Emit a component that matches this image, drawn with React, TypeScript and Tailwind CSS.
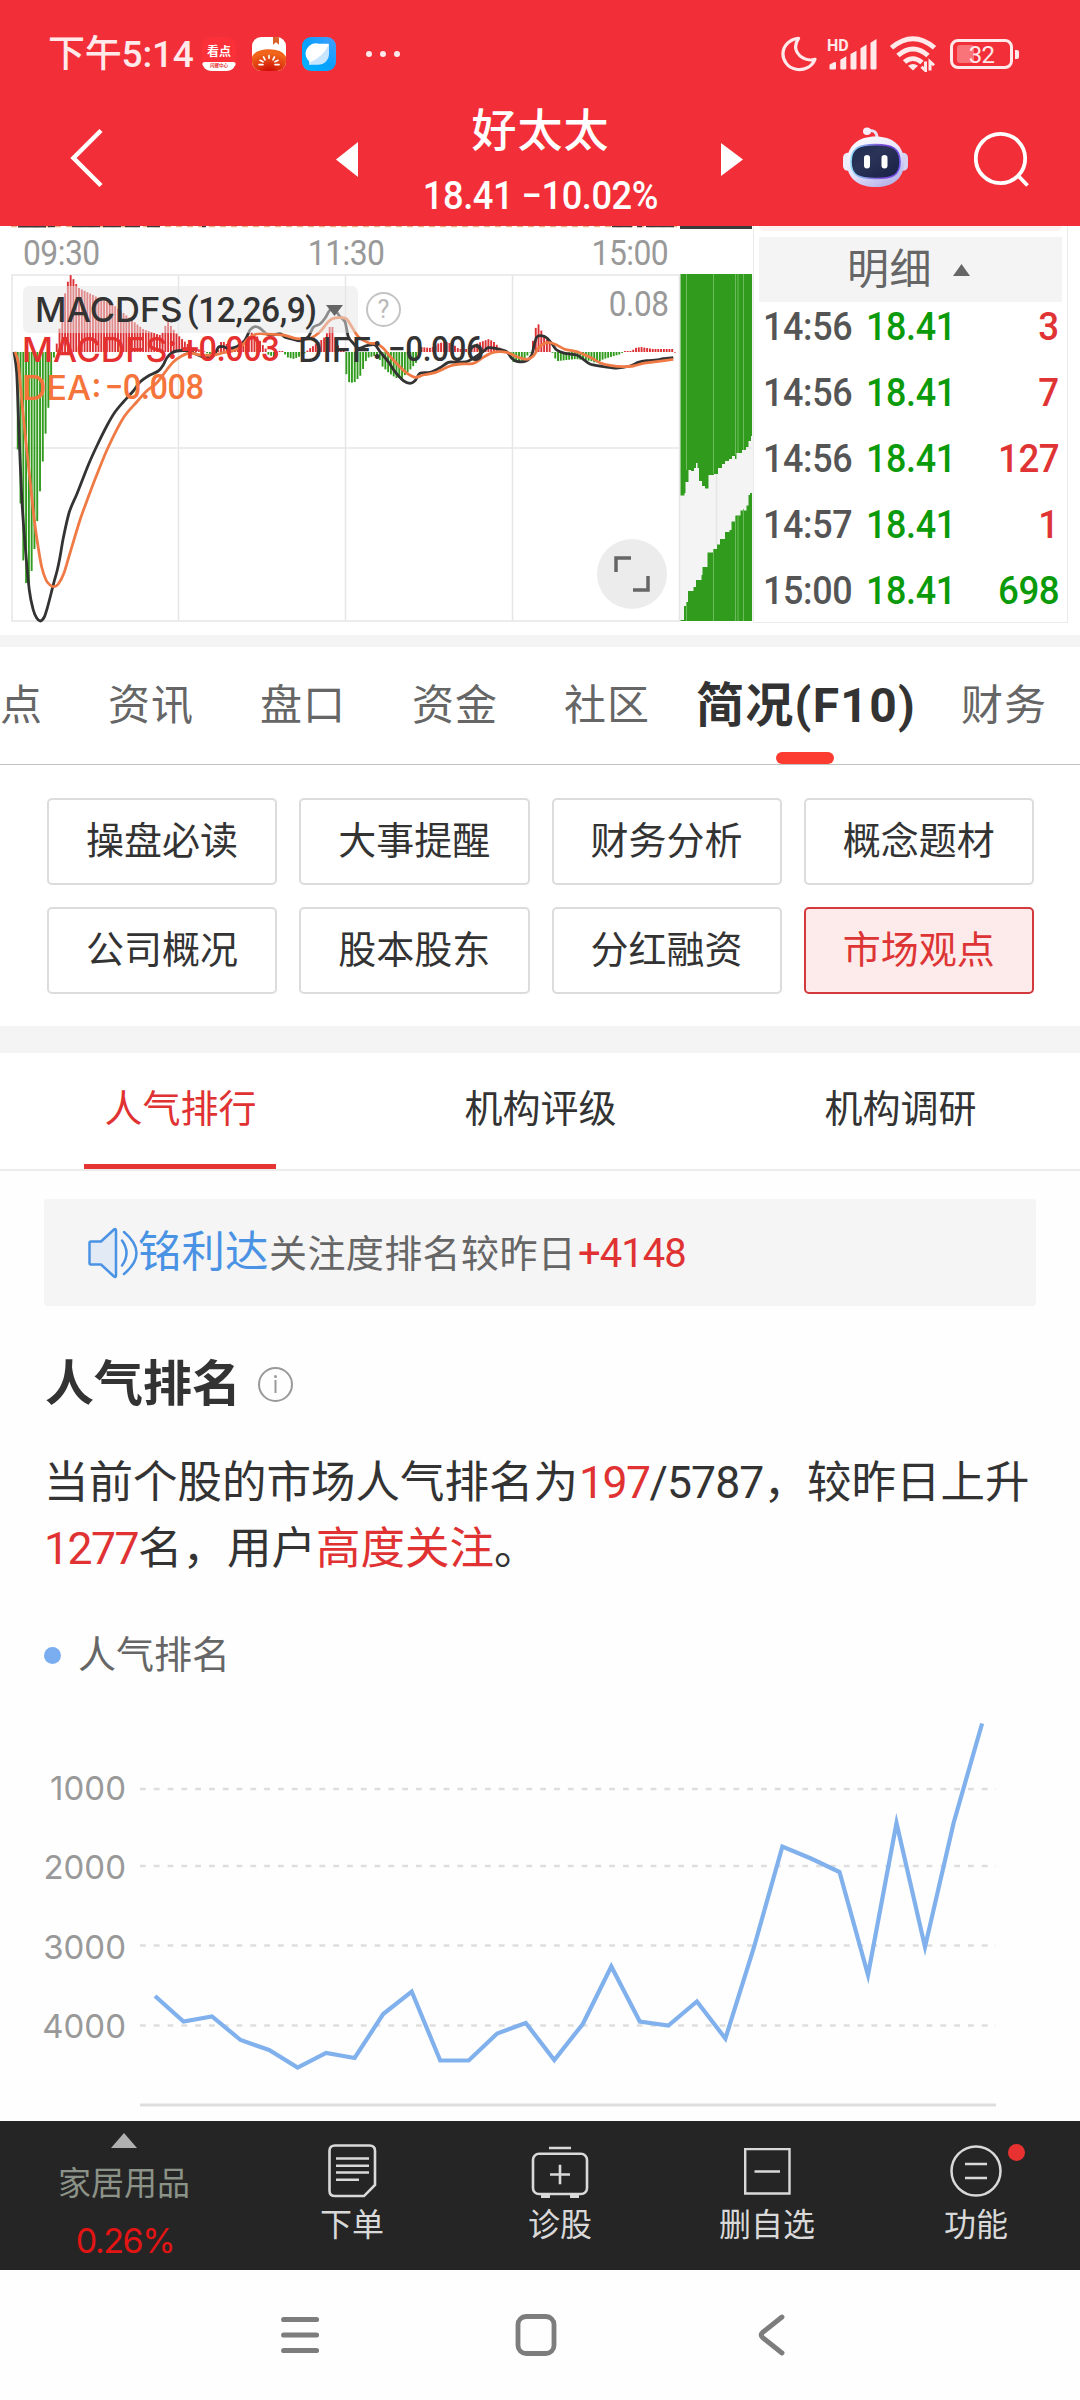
import React from "react";

type Pt = [number, number];

const DIFF: Pt[] = [
  [14, 352], [16.7, 373], [19, 433], [21.7, 497], [24.7, 540], [29.3, 590], [33.3, 610], [36.7, 618], [40.3, 621], [44.3, 617], [47.3, 608], [50.7, 595], [54, 582], [57.3, 570], [60, 557], [63.3, 538], [69.3, 512], [77.3, 493], [88.3, 465], [97.3, 445], [107.3, 425], [115, 412], [123.3, 402], [133.3, 391], [140, 382], [148.3, 376], [158.3, 371], [163.3, 365], [166.7, 358], [171.7, 353], [176.7, 351], [185, 350.7], [193.3, 353], [203.3, 357], [213.3, 356], [218.3, 347.3], [223.3, 346.7], [228.3, 348.3], [236.7, 346.7], [245, 340], [250, 330], [255, 326.7], [260, 328.3], [266.7, 334], [273.3, 335], [280, 333.3], [285, 337.3], [293.3, 339.3], [300, 340.7], [308.3, 336.7], [313.3, 327.3], [320, 324], [325, 318.3], [330, 310], [335, 310], [340, 316.7], [345, 321.7], [348.3, 336.7], [353.3, 343.3], [358.3, 348.3], [366.7, 345.7], [375, 345], [380, 351.7], [388.3, 361.7], [395, 371.7], [403.3, 380.7], [410, 383.3], [415, 380.7], [420, 373.3], [430, 372.3], [440, 367.7], [448.3, 362.3], [456.7, 362.3], [466.7, 361.7], [473.3, 358.3], [481.7, 352.7], [488.3, 347.7], [496.7, 348.7], [506.7, 351.7], [511.7, 358.3], [516.7, 361.3], [526, 361], [531.7, 355], [536.7, 337.3], [545, 336.7], [551.7, 343.3], [556.7, 350], [565, 353.3], [576.7, 355], [583.3, 359.3], [590, 364], [600, 366], [616.7, 368], [630, 366], [638.3, 362.3], [646.7, 360.7], [656.7, 360], [663.3, 358.7], [673.3, 357.7],
];
const DEA: Pt[] = [
  [15, 352], [18.3, 363], [21.7, 400], [25, 433], [30, 480], [34.3, 520], [38.3, 548], [41.7, 567], [46, 580], [50, 585], [54, 586.7], [58.3, 584], [64, 573], [70, 553], [80, 520], [88.3, 497], [96.7, 475], [108.3, 447], [123.3, 418], [136.7, 402], [146.7, 391], [156.7, 383], [166.7, 370], [173.3, 362], [181.7, 356], [190, 353], [200, 355], [213.3, 355], [223.3, 352.7], [233.3, 350.7], [241.7, 346], [248.3, 338.3], [256.7, 334], [266.7, 334], [283.3, 335], [296.7, 338.7], [310, 338.3], [320, 331.7], [328.3, 321.7], [333.3, 318.3], [341.7, 317.7], [346.7, 319], [351.7, 326.7], [358.3, 336.7], [368.3, 342.7], [376.7, 344], [383.3, 348.3], [393.3, 360], [405, 371.7], [415, 377.3], [423.3, 375], [435, 372.7], [450, 366], [460, 364], [473.3, 363.3], [483.3, 357.3], [493.3, 352.3], [506.7, 352.3], [516.7, 356.7], [526.7, 359.3], [533.3, 356], [538.3, 348.3], [543.3, 344], [550, 342.7], [556.7, 345], [565, 349.3], [576.7, 351.7], [590, 357.3], [600, 362.7], [610, 365.3], [623.3, 366.7], [633.3, 366], [643.3, 363.3], [656.7, 361.7], [673.3, 359.3],
];

/* Histogram end points: x and the y of the bar's tip; the zero line is y = 352. */
const HIST: Pt[] = [
  [14, 358], [16.8, 450], [19.6, 504], [22.3, 560], [25.1, 583], [27.9, 584], [30.7, 571], [33.5, 549], [36.2, 522], [39, 492], [41.8, 462], [44.6, 434], [47.4, 408], [50.1, 378], [52.9, 358], [55.7, 344], [58.5, 329], [61.3, 310], [64, 294], [66.8, 282], [69.6, 275], [72.4, 279], [75.2, 284], [78, 288], [86, 292], [114, 306], [142, 329], [158.6, 335], [161.5, 333], [164.3, 326], [167, 322], [170, 326], [175, 333], [181, 339], [190, 347], [203, 351], [205, 353], [214, 355], [217, 351], [219, 342], [224, 342], [228, 347], [236, 350], [243, 345], [247, 338], [250, 332], [256, 336], [261, 344], [265, 349], [266, 354], [275, 358], [278, 351], [283, 351], [285, 357], [293, 359], [302, 355], [305, 352], [308, 349], [318, 342], [325, 336], [328, 327], [331.5, 327], [334, 337], [338, 348], [343, 351], [345.5, 375], [348.5, 383], [354, 382], [360, 375], [366, 358], [377, 355], [381, 366], [388, 373], [395, 378], [401, 378], [409, 370], [415, 363], [418, 353], [420, 347], [430, 348], [438, 343], [446, 342], [453, 345], [458, 349], [468, 349], [477, 343], [488, 339], [493, 342], [499, 348], [504, 351], [507, 353], [512, 362], [520, 362], [526, 356], [529, 353], [531, 346], [534.3, 329], [537, 323], [540, 330], [545, 338], [549, 344], [551, 351], [552.7, 357], [557, 361], [575, 359], [590, 361], [595, 363], [603, 359], [620, 354], [623, 351], [631, 351], [634, 348], [640, 347], [652, 349], [674, 349],
];
const sampleHist = (x: number): number => {
  for (let i = 1; i < HIST.length; i++) {
    const [x0, y0] = HIST[i - 1];
    const [x1, y1] = HIST[i];
    if (x <= x1) return y0 + ((y1 - y0) * (x - x0)) / (x1 - x0);
  }
  return 352;
};
const BARS = Array.from({ length: 238 }, (_, i) => {
  const x = 14 + i * 2.785;
  return { x, y: sampleHist(x) };
});

const smooth = (p: Pt[]): string => {
  let d = `M${p[0][0]},${p[0][1]}`;
  for (let i = 0; i < p.length - 1; i++) {
    const a = p[Math.max(0, i - 1)], b = p[i], c = p[i + 1], e = p[Math.min(p.length - 1, i + 2)];
    d += `C${b[0] + (c[0] - a[0]) / 7},${b[1] + (c[1] - a[1]) / 7} ${c[0] - (e[0] - b[0]) / 7},${c[1] - (e[1] - b[1]) / 7} ${c[0]},${c[1]}`;
  }
  return d;
};

const UPPER: Pt[] = [[680.5, 495.5], [684.5, 493], [685.5, 482], [688.5, 470], [691, 471], [694, 468], [696, 463], [697.5, 468], [699, 481], [702, 486], [705, 488.5], [708.5, 475], [714, 474], [718, 468], [722, 464], [725, 461], [729, 459], [732, 456], [735, 459], [736.5, 453], [742, 450], [746, 447], [748.5, 441], [751, 436]];
const LOWER: Pt[] = [[680.5, 620], [684, 606], [686.5, 602], [688, 591], [693.5, 587], [696, 580], [701.5, 575], [702.5, 567], [707.5, 552.5], [713.5, 549], [717, 544.5], [720, 539], [725, 532], [729.5, 530], [731.5, 521.5], [735.5, 515.5], [740.5, 510.5], [746.5, 505.5], [748.5, 495], [750, 493]];
const steps = (p: Pt[], edge: number) =>
  `M${p[0][0]},${edge}` + p.map(([x, y]) => `H${x}V${y}`).join("") + `H752V${edge}Z`;

const RANK_Y = [1996, 2021.5, 2016.5, 2040, 2050, 2067.5, 2053, 2058, 2014, 1991.5, 2060.5, 2060.5, 2033.5, 2023, 2060, 2024, 1966.5, 2021.5, 2025.5, 2001.5, 2038.5, 1947.5, 1846.5, 1858.5, 1872, 1975, 1823, 1947, 1823, 1723.5];

const Status = () => (
  <div className="flex h-[92px] items-center pt-[16px] pl-[48px] text-[#ffe9ea]">
    <span className="w-[154px] text-[37px] leading-none font-medium tracking-[-0.2px] whitespace-nowrap">下午5:14</span>
    <div className="relative flex h-[34px] w-[34px] flex-col items-center overflow-hidden rounded-[9px] bg-[#fb3039]">
      <span className="mt-[8px] text-[12px] leading-[14px] font-bold text-white">看点</span>
      <div className="mt-[3px] flex h-[9px] w-full items-center justify-center rounded-t-[3px] bg-white">
        <span className="text-[4.5px] leading-none font-bold text-[#e8383c]">闪耀中心</span>
      </div>
    </div>
    <svg className="ml-[16px] rounded-[9px]" width="34" height="34" viewBox="0 0 34 35" preserveAspectRatio="none">
      <defs><radialGradient id="tomato" cx=".5" cy="1" r=".8"><stop offset="0" stopColor="#cc0b05" /><stop offset="1" stopColor="#f0651a" /></radialGradient></defs>
      <rect width="34" height="35" fill="#fff" />
      <path d="M0 20Q4 12.500 17 12.500T34 20V35H0Z" fill="url(#tomato)" />
      <path d="M21 0h6v8l-3-2.500-3 2.500Z" fill="#d9612b" />
      <path d="M17 19v3M11.500 20.500l1.500 3M22.500 20.500l-1.500 3M8 24l3 1.500M26 24l-3 1.500M7 28.500h4M27 28.500h-4" stroke="#fff" strokeWidth="1.700" strokeLinecap="round" />
    </svg>
    <svg className="ml-[16px] rounded-[9px]" width="34" height="34" viewBox="0 0 34 35" preserveAspectRatio="none">
      <defs><linearGradient id="planet" x1="0" y1="1" x2="1" y2="0"><stop offset="0" stopColor="#00b4fd" /><stop offset=".5" stopColor="#09a0ff" /><stop offset="1" stopColor="#4a9dff" /></linearGradient></defs>
      <rect width="34" height="35" fill="url(#planet)" />
      <path d="M27 7v11a10.500 10.500 0 0 1-10.500 10.500H7V18Z" fill="#c7e5ff" />
      <path d="M17 7h9.500v1.500Q21 20 8.500 26A10.500 10.500 0 0 1 17 7Z" fill="#fff" />
    </svg>
    <svg className="ml-[29px]" width="36" height="8" viewBox="0 0 36 8" fill="currentColor"><circle cx="4" cy="4" r="3" /><circle cx="18" cy="4" r="3" /><circle cx="32" cy="4" r="3" /></svg>
    <svg className="ml-[380px]" width="36" height="36" viewBox="0 0 36 38" preserveAspectRatio="none" fill="none" stroke="currentColor" strokeWidth="3.200" strokeLinejoin="round"><path d="M17.500 2.500A16.500 16.500 0 1 0 34 24.500Q26 27 19 21Q11 13 17.500 2.500Z" /></svg>
    <div className="relative ml-[10px] h-[34px] w-[52px]">
      <span className="absolute top-[1px] left-0 text-[16px] leading-[16px] font-bold">HD</span>
      <svg className="absolute top-0 left-0" width="52" height="34" viewBox="0 0 52 36" preserveAspectRatio="none" fill="currentColor">
        <path d="M2.500 34v-4q0-1 1-1.500l4-2q1.500-.500 1.500 1V33q0 1.500-1.500 1.500H3.500Q2.500 34.500 2.500 34ZM13.300 24l6-3.500V33q0 1.500-1.500 1.500h-3q-1.500 0-1.500-1.500ZM23.500 18l6-3.500V33q0 1.500-1.500 1.500h-3q-1.500 0-1.500-1.500ZM33.500 12l6-4V33q0 1.500-1.500 1.500h-3q-1.500 0-1.500-1.500ZM43.500 6l6-4V33q0 1.500-1.500 1.500h-3q-1.500 0-1.500-1.500Z" />
      </svg>
    </div>
    <svg className="ml-[10px]" width="48" height="36" viewBox="0 0 48 38" preserveAspectRatio="none" fill="none" stroke="currentColor" strokeWidth="5">
      <path d="M2.500 12.500Q24-6.500 45.500 12.500" /><path d="M9 20.500Q24 7 39 20.500" /><path d="M15.500 27.500Q24 20 33 28" />
      <path d="M19 31.500Q24 27.500 29 31.500L24 36.500Z" fill="currentColor" stroke="none" />
      <path d="M36.500 27v9.500l-4-4M41 36.500V27l4 4" strokeWidth="3" />
    </svg>
    <div className="ml-[13px] flex items-center">
      <div className="relative flex h-[30px] w-[63px] items-center justify-center rounded-[8px] border-[3px] border-[#ffe9ea]">
        <div className="absolute top-[3px] left-[4px] h-[18px] w-[17px] rounded-[3px] bg-[#f97479]" />
        <span className="relative pt-[2px] text-[24px] leading-none tracking-[-0.7px]">32</span>
      </div>
      <div className="ml-[2px] h-[9px] w-[4px] rounded-r-[2px] bg-[#ffe9ea]" />
    </div>
  </div>
);

const Header = () => (
  <header className="h-[226px] bg-[#f22f38]">
    <Status />
    <div className="flex h-[134px] items-center text-white">
      <svg className="ml-[70px] -mt-[2px]" width="34" height="60" viewBox="0 0 34 60" fill="none" stroke="#fff" strokeWidth="4.500"><path d="M31 2.500L3.500 30L31 57.500" /></svg>
      <svg className="ml-[232px]" width="22" height="35" viewBox="0 0 22 36" fill="#fff" preserveAspectRatio="none"><path d="M22 0V36L0 18Z" /></svg>
      <div className="ml-[66px] flex h-full w-[233px] flex-col items-center pt-[17px] whitespace-nowrap">
        <span className="text-[45px] leading-[46px] font-medium tracking-[1px]">好太太</span>
        <span className="mt-[21px] inline-block scale-x-[0.93] text-[39px] leading-[40px] font-medium tracking-[-0.5px]">18.41 −10.02%</span>
      </div>
      <svg className="ml-[64px]" width="22" height="33" viewBox="0 0 22 34" fill="#fff" preserveAspectRatio="none"><path d="M0 0V34L22 17Z" /></svg>
      <svg className="ml-[99px] -mt-[3px]" width="67" height="63" viewBox="0 0 67 66" preserveAspectRatio="none">
        <defs>
          <linearGradient id="shell" x1="0" y1="0" x2=".6" y2="1"><stop offset="0" stopColor="#fff" /><stop offset=".6" stopColor="#e6e4fb" /><stop offset="1" stopColor="#b9b6ea" /></linearGradient>
          <linearGradient id="visor" x1="0" y1="0" x2="1" y2="1"><stop offset="0" stopColor="#1b2b4f" /><stop offset=".4" stopColor="#2b3358" /><stop offset="1" stopColor="#161f45" /></linearGradient>
          <linearGradient id="rim" x1="0" y1="0" x2="1" y2="0"><stop offset="0" stopColor="#8fd8f7" /><stop offset=".7" stopColor="#7b41d8" /><stop offset="1" stopColor="#6b53e6" /></linearGradient>
        </defs>
        <path d="M25 5Q35 3 35 13" fill="none" stroke="#e7dff3" strokeWidth="3" /><circle cx="25" cy="5.500" r="4" fill="#f6eefa" />
        <rect x="1" y="28" width="12" height="19" rx="5" fill="#efedfb" /><rect x="54" y="28" width="12" height="19" rx="5" fill="#d5d3f2" />
        <path d="M33.500 11C50 11 62 20 62 38C62 56 50 64 33.500 64S5 56 5 38C5 20 17 11 33.500 11Z" fill="url(#shell)" />
        <path d="M33.500 19.500C50 19.500 58 23 58 37.500S50 55 33.500 55S9 52 9 37.500S17 19.500 33.500 19.500Z" fill="url(#visor)" stroke="url(#rim)" strokeWidth="1.600" />
        <rect x="22" y="30.500" width="6" height="14" rx="3" fill="#fff" /><rect x="39.500" y="30.500" width="6" height="14" rx="3" fill="#fff" />
      </svg>
      <svg className="ml-[65px]" width="56" height="56" viewBox="0 0 56 56" fill="none" stroke="#fff" strokeWidth="3.800"><circle cx="26.500" cy="27.500" r="24.700" /><path d="M44 44.500L53.500 54.500" /></svg>
    </div>
  </header>
);

const TRADES = [
  ["14:56", "18.41", "3", false],
  ["14:56", "18.41", "7", false],
  ["14:56", "18.41", "127", false],
  ["14:57", "18.41", "1", false],
  ["15:00", "18.41", "698", true],
] as const;

const Intraday = () => (
  <section className="relative flex h-[409px] bg-white">
    <svg className="absolute top-0 left-0" width="754" height="409" viewBox="0 226 754 409">
      <path d="M11 226.700H678" stroke="#e0a56f" strokeWidth="1" strokeDasharray="6 5" />
      <path d="M18 226.700h28M48 226.500h7M72 226.500h28M103 226.500h18M125 226.500h15M147 226.500h13M202 226.500h4M612 226.500h20M637 226.500h5M646 226.500h28" stroke="#3a3a3a" strokeWidth="1.500" />
      <path d="M680 227.500h72" stroke="#3a3a3a" strokeWidth="3" />
      <rect x="680" y="275" width="73" height="346" fill="#f4f4f4" />
      <g stroke="#e6e6e6" strokeWidth="1.500" fill="none">
        <path d="M12 275H679.500V621H12ZM12 448H753M178.500 275V621M345.500 275V621M512.500 275V621" />
        <path d="M716.500 460V545" />
      </g>
      {BARS.map((b) => (
        <rect key={b.x} x={b.x} y={Math.min(352, b.y)} width="1.900" height={Math.max(0.6, Math.abs(b.y - 352))} fill={b.y > 352 ? "#319b1d" : "#dc3034"} />
      ))}
      <path d={steps(UPPER, 274)} fill="#319b1d" />
      <path d={steps(LOWER, 621)} fill="#319b1d" />
      <path d="M686.500 274V470M713.500 274V474M735.500 274V455M738 274V453M743.500 274V450M686.500 602V621M713.500 549V621M735.500 516V621M738 515V621M743.500 509V621" stroke="#6cbb5d" strokeWidth="1" />
      <path d={smooth(DIFF)} fill="none" stroke="#333" strokeWidth="2.800" />
      <path d={smooth(DEA)} fill="none" stroke="#ef7a45" strokeWidth="2.800" />
    </svg>
    <div className="relative w-[680px] shrink-0">
      <div className="flex h-[48px] justify-between pt-[10px] pr-[12px] pl-[23px] text-[35px] leading-[36px] tracking-[-0.6px] text-[#999]">
        <span className="inline-block origin-left scale-x-[0.91]">09:30</span>
        <span className="ml-[1px] inline-block scale-x-[0.91]">11:30</span>
        <span className="inline-block origin-right scale-x-[0.91]">15:00</span>
      </div>
      <div className="mt-[12px] flex items-center justify-between pr-[11px] pl-[23px]">
        <div className="flex h-[47px] w-[335px] items-center rounded-[6px] bg-[#e5e5e5]/50 pt-[2px] pl-[12px] whitespace-nowrap text-[#333]">
          <span className="w-[152px] font-['Inter'] text-[34.5px] leading-none font-medium">MACDFS</span>
          <span className="inline-block origin-left scale-x-[0.96] text-[35px] leading-none font-medium tracking-[-0.5px]">(12,26,9)</span>
          <svg className="ml-auto mr-[15px]" width="17" height="11" viewBox="0 0 17 11" fill="#666"><path d="M0 0H17L8.500 11Z" /></svg>
        </div>
        <div className="mr-auto ml-[8px] flex size-[35px] items-center justify-center rounded-full border-2 border-[#c4c4c4] text-[25px] leading-none text-[#b8b8b8]">?</div>
        <span className="-mt-[10px] inline-block origin-right scale-x-[0.9] text-[35px] leading-none tracking-[-0.4px] text-[#999]">0.08</span>
      </div>
      <div className="-mt-[3px] flex pl-[22px] text-[35px] leading-[40px] font-medium whitespace-nowrap">
        <div className="flex w-[276px] text-[#e53030]"><span className="w-[159px] font-['Inter'] text-[34px]">MACDFS:</span><span className="inline-block origin-left scale-x-[0.93] tracking-[-0.5px]">+0.003</span></div>
        <div className="flex text-[#333]"><span className="w-[90px] font-['Inter'] text-[34px]">DIFF:</span><span className="inline-block origin-left scale-x-[0.9] tracking-[-0.5px]">−0.006</span></div>
      </div>
      <div className="-mt-[1px] flex pl-[22px] text-[35px] leading-[38px] font-medium whitespace-nowrap text-[#f4743b]"><span className="w-[83px] font-['Inter'] text-[34px]">DEA:</span><span className="inline-block origin-left scale-x-[0.93] tracking-[-0.5px]">−0.008</span></div>
      <div className="absolute top-[313px] left-[597px] flex size-[70px] items-center justify-center rounded-full bg-[#ececec]">
        <svg width="36" height="36" viewBox="0 0 36 36" fill="none" stroke="#666" strokeWidth="3.500"><path d="M2 16V2H17M34 20V34H19" /></svg>
      </div>
    </div>
    <div className="ml-[73px] h-[397px] w-[315px] border-x border-b border-[#eaeaea] px-[5px]">
      <div className="h-[5px] rounded-b-[6px] bg-[#fdf1f1]" />
      <div className="mt-[6px] flex h-[65px] items-center justify-center bg-[#f4f4f4] pt-[1px] pr-[4px] text-[42px] leading-none tracking-[0.5px] text-[#666]">
        <span>明细</span>
        <svg className="ml-[21px]" width="17" height="12" viewBox="0 0 17 12" fill="#666"><path d="M8.500 0L17 12H0Z" /></svg>
      </div>
      <div className="-mt-[8px]">
        {TRADES.map(([t, p, v, green], i) => (
          <div key={i} className="flex h-[66px] items-center pr-[3px] pl-[4px] text-[39px] leading-none font-medium tracking-[-0.4px]">
            <span className="inline-block w-[103px] origin-left scale-x-[0.92] text-[#555]">{t}</span>
            <span className="inline-block origin-left scale-x-[0.92] text-[#0a9a0a]">{p}</span>
            <span className={green ? "ml-auto inline-block origin-right scale-x-[0.94] text-[#0a9a0a]" : "ml-auto inline-block origin-right scale-x-[0.94] text-[#e03434]"}>{v}</span>
          </div>
        ))}
      </div>
    </div>
  </section>
);

const Tabs = () => (
  <nav className="relative h-[118px] overflow-hidden border-b border-[#c0c0c0] bg-white">
    <div className="flex h-[118px] items-center text-[42px] leading-none tracking-[0.9px] whitespace-nowrap text-[#666]">
      <span className="w-[108px]">点</span>
      <span className="w-[152px]">资讯</span>
      <span className="w-[152px]">盘口</span>
      <span className="w-[152px]">资金</span>
      <span className="w-[132px]">社区</span>
      <span className="w-[265px] text-[48px] font-bold tracking-[1.3px] text-[#333]">简况(F10)</span>
      <span>财务</span>
    </div>
    <div className="absolute bottom-0 left-[776px] h-[12px] w-[58px] rounded-[6px] bg-[#fc3c30]" />
  </nav>
);

const CHIPS = ["操盘必读", "大事提醒", "财务分析", "概念题材", "公司概况", "股本股东", "分红融资", "市场观点"];

const Chips = () => (
  <div className="grid h-[261px] grid-cols-4 content-start gap-x-[22px] gap-y-[22px] bg-white pt-[33px] pr-[46px] pl-[47px]">
    {CHIPS.map((c) => (
      <div key={c} className={c === "市场观点"
        ? "flex h-[87px] items-center justify-center rounded-[5px] border-2 border-[#d23a3d] bg-[#fdeaea] pb-[1px] text-[38px] leading-none text-[#dd3535]"
        : "flex h-[87px] items-center justify-center rounded-[5px] border-2 border-[#dcdcdc] pb-[1px] text-[38px] leading-none text-[#333]"}>{c}</div>
    ))}
  </div>
);

const SubTabs = () => (
  <nav className="grid h-[118px] grid-cols-3 border-b-2 border-[#ececec] bg-white text-[38px] leading-none text-[#333]">
    {["人气排行", "机构评级", "机构调研"].map((t, i) => (
      <div key={t} className={i === 0 ? "relative flex justify-center pt-[37px] pl-[1px] text-[#e03232]" : "flex justify-center pt-[37px] pl-[1px]"}>
        {t}
        {i === 0 && <div className="absolute bottom-0 left-[84px] h-[5px] w-[192px] bg-[#e43434]" />}
      </div>
    ))}
  </nav>
);

const Notice = () => (
  <div className="mx-[44px] mt-[28px] flex h-[107px] items-center rounded-[4px] bg-[#f5f5f5] pl-[44px] whitespace-nowrap">
    <svg width="51" height="52" viewBox="0 0 51 52" fill="none" stroke="#4a92e4" strokeWidth="2.500" strokeLinejoin="round">
      <path d="M3 14.500Q1.500 14.500 1.500 16V36Q1.500 37.500 3 37.500H13L26 49.500Q28 51 28 48V4Q28 1 26 2.500L13 14.500Z" fill="#e1eaf5" />
      <path d="M34 13.500Q43 26 34 38.500" strokeLinecap="round" /><path d="M36 5Q61 26 36 47" strokeLinecap="round" />
    </svg>
    <span className="-ml-[1px] w-[131px] text-[43.5px] leading-none text-[#4a92e4]">铭利达</span>
    <span className="w-[309px] pt-[3px] text-[38px] leading-none tracking-[0.4px] text-[#666]">关注度排名较昨日</span>
    <span className="pt-[3px] text-[40px] leading-none tracking-[-1px] text-[#e03232]">+4148</span>
  </div>
);

const GRID = [["1000", 1789], ["2000", 1866], ["3000", 1945.5], ["4000", 2025.5]] as const;

const RankChart = () => (
  <div className="relative h-[429px]">
    <svg className="absolute top-0 left-0" width="1080" height="429" viewBox="0 1692 1080 429" fill="none">
      {GRID.map(([l, y]) => <path key={l} d={`M140 ${y}H996`} stroke="#dedede" strokeWidth="2.500" strokeDasharray="5.800 8" />)}
      <path d="M140 2105H996" stroke="#dedede" strokeWidth="3" />
      <path d={"M" + RANK_Y.map((y, i) => `${(155 + i * 28.52).toFixed(1)},${y}`).join("L")} stroke="#80b1ec" strokeWidth="4.200" strokeMiterlimit="20" />
    </svg>
    <div className="flex w-[126px] flex-col items-end pt-[76px] font-['Inter'] text-[33px] leading-[40px] text-[#999]">
      {GRID.map(([l]) => <span key={l} className="mb-[39.300px]">{l}</span>)}
    </div>
  </div>
);

const Dock = () => (
  <footer className="flex h-[149px] bg-[#252525] text-[32px] leading-none text-[#d9d9d9]">
    <div className="flex w-[247px] flex-col items-center pt-[12px]">
      <svg className="ml-[1px]" width="26" height="15" viewBox="0 0 26 15" fill="#b0b0b0"><path d="M13 0L26 15H0Z" /></svg>
      <span className="mt-[19px] ml-[1px] text-[33px] text-[#8b9287]">家居用品</span>
      <span className="mt-[24px] ml-[3px] font-['Inter'] text-[34px] leading-[34px] tracking-[-1.400px] text-[#e31414]">0.26%</span>
    </div>
    <div className="-ml-[12px] flex w-[234px] flex-col items-center pt-[23px]">
      <svg width="49" height="54" viewBox="0 0 49 56" preserveAspectRatio="none" fill="none" stroke="currentColor" strokeWidth="2.600"><path d="M7 1.500H41.500Q47 1.500 47 7V42.500L36 54H7Q1.500 54 1.500 48.500V7Q1.500 1.500 7 1.500ZM8 15H41M8 22.500H41M8 29.500H41M8 37H31" /></svg>
      <span className="mt-[11px]">下单</span>
    </div>
    <div className="flex w-[182px] flex-col items-center pt-[25px]">
      <svg width="58" height="52" viewBox="0 0 58 53" preserveAspectRatio="none" fill="none" stroke="currentColor" strokeWidth="2.600"><rect x="2" y="8" width="54" height="41" rx="6" /><path d="M18 2H40M29 19V39M19 29H39" /><path d="M10 51.500H19M39 51.500H48" strokeWidth="3" /></svg>
      <span className="mt-[11px]">诊股</span>
    </div>
    <div className="ml-[25px] flex w-[182px] flex-col items-center pt-[27px]">
      <svg width="47" height="47" viewBox="0 0 47 48" preserveAspectRatio="none" fill="none" stroke="currentColor" strokeWidth="2.400"><path d="M1.200 1.200H45.500V46.500H1.200ZM10.500 24H36" /></svg>
      <span className="mt-[14px]">删自选</span>
    </div>
    <div className="relative ml-[27px] flex w-[182px] flex-col items-center pt-[24px]">
      <svg width="52" height="52" viewBox="0 0 52 52" fill="none" stroke="currentColor" strokeWidth="2.500"><circle cx="26" cy="26" r="24.500" /><path d="M15 19H37M15 33H37" /></svg>
      <span className="mt-[12px]">功能</span>
      <div className="absolute top-[23px] left-[123px] size-[17px] rounded-full bg-[#e83232]" />
    </div>
  </footer>
);

const SystemNav = () => (
  <div className="flex h-[130px] bg-[#fefefe] pt-[43px] pl-[281px]">
    <svg width="38" height="44" viewBox="0 0 38 44" stroke="#7d7d7d" strokeWidth="5.200" strokeLinecap="round"><path d="M2.700 6.500H35.500M2.700 22H35.500M2.700 37.500H35.500" /></svg>
    <svg className="ml-[196px]" width="43" height="44" viewBox="0 0 43 44" fill="none" stroke="#7d7d7d" strokeWidth="4.800"><rect x="3" y="3.500" width="36" height="37" rx="8" /></svg>
    <svg className="ml-[200px]" width="28" height="44" viewBox="0 0 28 44" fill="none" stroke="#7d7d7d" strokeWidth="4.800" strokeLinecap="round" strokeLinejoin="round"><path d="M24 4L4.500 19.500Q2 22 4.500 24.500L24 40" /></svg>
  </div>
);

export default function App() {
  return (
    <div className="flex h-[2400px] w-[1080px] flex-col overflow-hidden bg-[#fefefe] font-['Roboto','Noto_Sans_CJK_SC',sans-serif]">
      <Header />
      <Intraday />
      <div className="h-[12px] bg-[#f4f4f4]" />
      <Tabs />
      <Chips />
      <div className="h-[27px] bg-[#f4f4f4]" />
      <SubTabs />
      <Notice />
      <div className="mt-[54px] flex h-[48px] items-center pl-[45px]">
        <h2 className="text-[49px] leading-none font-bold text-[#333]">人气排名</h2>
        <div className="ml-[17px] flex size-[35px] items-center justify-center rounded-full border-[2.5px] border-[#999] text-[#999]">
          <svg width="5" height="18" viewBox="0 0 5 18" fill="currentColor"><circle cx="2.500" cy="1.500" r="1.500" /><rect x="1.500" y="5" width="2" height="13" /></svg>
        </div>
      </div>
      <p className="mt-[42px] pl-[44px] text-[44.500px] leading-[66px] whitespace-nowrap text-[#333]">
        当前个股的市场人气排名为<span className="ml-[1px] tracking-[-1.500px] text-[#e03232]">197</span><span className="tracking-[-0.900px]">/5787，</span>较昨日上升
        <br />
        <span className="tracking-[-1.500px] text-[#e03232]">1277</span>名，用户<span className="text-[#e03232]">高度关注</span>。
      </p>
      <div className="mt-[51px] mb-[15px] flex h-[44px] items-center pl-[44px] text-[38px] leading-none text-[#666]">
        <div className="mr-[17px] size-[17px] rounded-full bg-[#79adf0]" />人气排名
      </div>
      <RankChart />
      <Dock />
      <SystemNav />
    </div>
  );
}
